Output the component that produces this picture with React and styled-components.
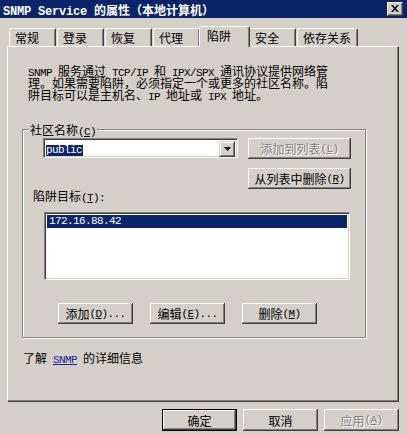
import React from "react";
import styled, { createGlobalStyle } from "styled-components";

const FACE = "#d4d0c8";
const NAVY = "#0a246a";

const GlobalStyle = createGlobalStyle`
  html, body {
    margin: 0;
    padding: 0;
    background: ${FACE};
  }
  body {
    font-family: "Noto Sans CJK SC", "Noto Sans", sans-serif;
    font-size: 12px;
    line-height: 13px;
    color: #000;
  }
`;

const Latin = styled.span`
  font-family: "Liberation Mono", monospace;
  font-size: ${p => (p.$bold ? 12 : 11)}px;
  font-weight: ${p => (p.$bold ? "bold" : "normal")};
  letter-spacing: ${p => (p.$bold ? -0.2 : -0.6)}px;
  line-height: 0;
  white-space: pre;
`;

const isAscii = s => /^[\x20-\x7e]+$/.test(s);
const mix = (text, bold) =>
  text
    .split(/([\x20-\x7e]+)/)
    .filter(Boolean)
    .map((part, i) =>
      isAscii(part) ? (
        <Latin key={i} $bold={bold}>
          {part}
        </Latin>
      ) : (
        part
      )
    );

const Key = ({ k }) => (
  <Latin>
    (<u>{k}</u>)
  </Latin>
);

const Window = styled.div`
  width: 407px;
  height: 434px;
  overflow: hidden;
  background: ${FACE};
`;

const TitleBar = styled.div`
  height: 18px;
  box-sizing: border-box;
  padding: 0 4px 0 3px;
  display: flex;
  align-items: center;
  justify-content: space-between;
  background: ${NAVY};
  color: #fff;
`;

const Title = styled.div`
  font-weight: bold;
  white-space: nowrap;
`;

const CloseButton = styled.div`
  width: 16px;
  height: 14px;
  box-sizing: border-box;
  display: flex;
  align-items: center;
  justify-content: center;
  padding: 0 1px 1px 0;
  background: ${FACE};
  border: 1px solid;
  border-color: #fff #404040 #404040 #fff;
  box-shadow: inset -1px -1px #808080;
`;

const Client = styled.div`
  padding: 0 8px 0 7px;
`;

const TabStrip = styled.div`
  height: 20px;
  margin-top: 8px;
  padding-left: 2px;
  display: flex;
  align-items: flex-end;
  gap: 1px;
`;

const Tab = styled.div`
  position: relative;
  z-index: ${p => (p.$active ? 1 : 0)};
  box-sizing: border-box;
  min-width: ${p => (p.$active ? 51 : 47)}px;
  height: ${p => (p.$active ? 21 : 18)}px;
  margin: ${p => (p.$active ? "0 -2px -1px" : "0")};
  padding: ${p => (p.$active ? "2px 6px 0 7px" : "2px 6px 0 5px")};
  background: ${FACE};
  border: 1px solid;
  border-bottom: none;
  border-color: #fff #404040 transparent #fff;
  border-radius: 2px 2px 0 0;
  box-shadow: inset -1px 0 #808080;
  white-space: nowrap;
`;

const Panel = styled.div`
  box-sizing: border-box;
  height: 356px;
  padding: 18px 0 0 15px;
  border: 1px solid;
  border-color: #fff #404040 #404040 #fff;
  box-shadow: inset -1px -1px #808080;
`;

const Description = styled.p`
  margin: 0 0 0 5px;
  line-height: 12px;
  white-space: nowrap;
`;

const GroupBox = styled.fieldset`
  box-sizing: border-box;
  width: 344px;
  min-inline-size: 0;
  margin: 22px 0 0 -1px;
  padding: 2px 0 13px 0;
  border: 1px solid #808080;
  box-shadow: 1px 1px 0 #fff, inset 1px 1px 0 #fff;
`;

const GroupTitle = styled.legend`
  margin-left: 6px;
  padding: 0 1px;
  line-height: 13px;
  background: ${FACE};
`;

const GroupBody = styled.div`
  padding-left: 20px;
`;

const TopRow = styled.div`
  display: flex;
  align-items: flex-start;
  gap: 10px;
`;

const ButtonColumn = styled.div`
  display: flex;
  flex-direction: column;
  gap: 9px;
`;

const Sunken = styled.div`
  box-sizing: border-box;
  background: #fff;
  border: 1px solid;
  border-color: #808080 #fff #fff #808080;
  box-shadow: inset 1px 1px #404040, inset -1px -1px ${FACE};
`;

const Combo = styled(Sunken)`
  width: 195px;
  height: 20px;
  padding: 2px;
  display: flex;
`;

const ComboText = styled.div`
  flex: 1;
`;

const Value = styled.span`
  display: inline-block;
  height: 11px;
  margin-top: 2px;
  padding: 0 1px 0 0;
  font-family: "Liberation Mono", monospace;
  font-size: 11px;
  letter-spacing: -0.6px;
  line-height: 11px;
  background: ${NAVY};
  color: #fff;
`;

const DropButton = styled.div`
  width: 16px;
  height: 16px;
  box-sizing: border-box;
  display: flex;
  align-items: center;
  justify-content: center;
  background: ${FACE};
  border: 1px solid;
  border-color: ${FACE} #404040 #404040 ${FACE};
  box-shadow: inset 1px 1px #fff, inset -1px -1px #808080;
`;

const Button = styled.button`
  box-sizing: border-box;
  width: ${p => p.$w || 75}px;
  height: ${p => p.$h || 21}px;
  margin: 0;
  padding: 0;
  display: flex;
  align-items: center;
  justify-content: center;
  font: inherit;
  line-height: 13px;
  white-space: nowrap;
  background: ${FACE};
  border: ${p => (p.$default ? "1px solid #000" : "none")};
  box-shadow: inset -1px -1px #404040, inset 1px 1px #fff,
    inset -2px -2px #808080;
  color: ${p => (p.disabled ? "#808080" : "#000")};
  text-shadow: ${p => (p.disabled ? "1px 1px 0 #fff" : "none")};
`;

const FieldLabel = styled.div`
  margin-left: -10px;
  line-height: 13px;
`;

const ListBox = styled(Sunken)`
  width: 306px;
  height: 68px;
  margin: 10px 0 0 1px;
  padding: 2px;
`;

const ListItem = styled.div`
  height: 13px;
  padding-left: 2px;
  font-family: "Liberation Mono", monospace;
  font-size: 11px;
  letter-spacing: -0.6px;
  line-height: 13px;
  background: ${p => (p.$selected ? NAVY : "transparent")};
  color: ${p => (p.$selected ? "#fff" : "#000")};
`;

const ButtonRow = styled.div`
  margin-top: 23px;
  padding-left: 15px;
  display: flex;
  gap: 17px;
`;

const InfoLine = styled.div`
  margin: 13px 0 0 0;
  white-space: nowrap;
`;

const Link = styled.a`
  color: #1a1aa6;
  text-decoration: underline;
`;

const Footer = styled.div`
  margin-top: 7px;
  display: flex;
  justify-content: flex-end;
  gap: 6px;
`;

const tabs = ["常规", "登录", "恢复", "代理", "陷阱", "安全", "依存关系"];
const currentTab = "陷阱";

const CloseGlyph = () => (
  <svg width="8" height="7" viewBox="0 0 8 7">
    <path d="M0 0h2l2 2.4L6 0h2L5 3.5 8 7H6L4 4.6 2 7H0l3-3.5z" fill="#000" />
  </svg>
);

const DownArrow = () => (
  <svg width="7" height="4" viewBox="0 0 7 4">
    <path d="M0 0h7L3.5 4z" fill="#000" />
  </svg>
);

export default function App() {
  return (
    <>
      <GlobalStyle />
      <Window>
        <TitleBar>
          <Title>{mix("SNMP Service 的属性（本地计算机）", true)}</Title>
          <CloseButton>
            <CloseGlyph />
          </CloseButton>
        </TitleBar>
        <Client>
          <TabStrip>
            {tabs.map(t => (
              <Tab key={t} $active={t === currentTab}>
                {t}
              </Tab>
            ))}
          </TabStrip>
          <Panel>
            <Description>
              {mix("SNMP 服务通过 TCP/IP 和 IPX/SPX 通讯协议提供网络管")}
              <br />
              理。如果需要陷阱，必须指定一个或更多的社区名称。陷
              <br />
              {mix("阱目标可以是主机名、IP 地址或 IPX 地址。")}
            </Description>
            <GroupBox>
              <GroupTitle>
                社区名称<Key k="C" />
              </GroupTitle>
              <GroupBody>
                <TopRow>
                  <Combo>
                    <ComboText>
                      <Value>public</Value>
                    </ComboText>
                    <DropButton>
                      <DownArrow />
                    </DropButton>
                  </Combo>
                  <ButtonColumn>
                    <Button $w={103} disabled>
                      添加到列表<Key k="L" />
                    </Button>
                    <Button $w={103}>
                      从列表中删除<Key k="R" />
                    </Button>
                  </ButtonColumn>
                </TopRow>
                <FieldLabel>
                  陷阱目标<Key k="T" />
                  <Latin>:</Latin>
                </FieldLabel>
                <ListBox>
                  <ListItem $selected>172.16.88.42</ListItem>
                </ListBox>
                <ButtonRow>
                  <Button>
                    添加<Key k="D" />
                    <Latin>...</Latin>
                  </Button>
                  <Button>
                    编辑<Key k="E" />
                    <Latin>...</Latin>
                  </Button>
                  <Button>
                    删除<Key k="M" />
                  </Button>
                </ButtonRow>
              </GroupBody>
            </GroupBox>
            <InfoLine>
              了解<Latin> </Latin>
              <Link href="#">
                <Latin>SNMP</Latin>
              </Link>
              <Latin> </Latin>的详细信息
            </InfoLine>
          </Panel>
          <Footer>
            <Button $h={22} $default>
              确定
            </Button>
            <Button $h={22}>取消</Button>
            <Button $h={22} disabled>
              应用<Key k="A" />
            </Button>
          </Footer>
        </Client>
      </Window>
    </>
  );
}
